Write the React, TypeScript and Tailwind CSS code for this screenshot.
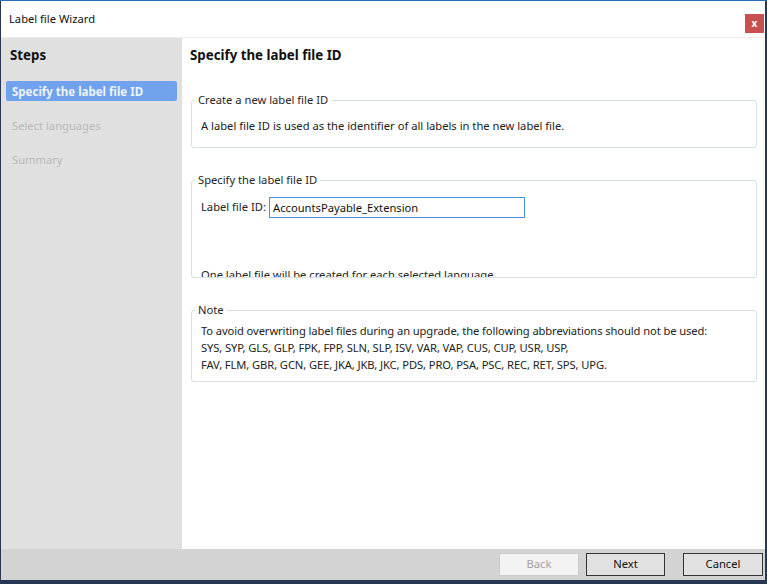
import React from "react";

const font = { fontFamily: '"Segoe UI", "Noto Sans", "Open Sans", sans-serif' };

function Group({ title, children }: { title: string; children: React.ReactNode }) {
  return (
    <fieldset className="border border-[#d7dfe7] rounded-[3px] px-[9px] min-w-0">
      <legend className="ml-[-6px] px-[3px] h-[16px] leading-[16px] text-[11.2px] text-[#262626]">{title}</legend>
      {children}
    </fieldset>
  );
}

export default function App() {
  return (
    <div
      className="w-[767px] h-[584px] bg-[#263754] pl-[1px] pr-[2px] pb-[4px] border-t border-t-[#2a6fb3] flex flex-col text-[#1a1a1a]"
      style={font}
    >
      {/* title bar */}
      <div className="h-[37px] bg-white flex items-start justify-between border-b border-b-[#ededed] shrink-0">
        <span className="pl-[8px] pt-[10px] text-[11.2px] leading-[16px] text-[#111]">Label file Wizard</span>
        <button className="mt-[13px] mr-[1px] w-[19px] h-[19px] bg-[#c75050] text-white text-[10px] font-bold leading-[19px] text-center">
          x
        </button>
      </div>

      <div className="flex flex-1 min-h-0">
        {/* steps */}
        <div className="w-[181px] bg-[#e0e0e0] pt-[7px] shrink-0">
          <div className="pl-[9px] text-[13.3px] font-bold leading-[20px] text-[#111]">Steps</div>
          <div className="mt-[16px] mx-[5px] h-[20px] rounded-[2px] bg-[#70a2ee] pl-[6px] text-[11.5px] font-bold leading-[21px] text-[#eef4fc]">
            Specify the label file ID
          </div>
          <div className="mt-[15px] pl-[11px] h-[20px] leading-[20px] text-[11.2px] text-[#b9b9b9]">Select languages</div>
          <div className="mt-[14px] pl-[11px] h-[20px] leading-[20px] text-[11.2px] text-[#b9b9b9]">Summary</div>
        </div>

        {/* content */}
        <div className="flex-1 bg-white pt-[7px] pl-[9px] pr-[8px]">
          <div className="ml-[-1px] text-[13.3px] font-bold leading-[20px] text-[#111]">Specify the label file ID</div>

          <div className="mt-[27px]">
            <Group title="Create a new label file ID">
              <p className="pt-[10px] pb-[13px] text-[11.2px] leading-[16px] text-[#222]">
                A label file ID is used as the identifier of all labels in the new label file.
              </p>
            </Group>
          </div>

          <div className="mt-[24px]">
            <Group title="Specify the label file ID">
              <div className="h-[89px] overflow-hidden pt-[9px]">
                <div className="flex items-center h-[21px] text-[11.2px] text-[#222]">
                  <span className="w-[68px] shrink-0">Label file ID:</span>
                  <input
                    className="w-[256px] h-[21px] border border-[#4a90e2] px-[3px] text-[11.2px] text-[#111] outline-none"
                    style={font}
                    defaultValue="AccountsPayable_Extension"
                  />
                </div>
                {/* the wizard page clips this line in the original */}
                <p className="mt-[49px] text-[11.2px] leading-[16px] text-[#222]">
                  One label file will be created for each selected language.
                </p>
              </div>
            </Group>
          </div>

          <div className="mt-[24px]">
            <Group title="Note">
              <p className="pt-[4px] pb-[8px] text-[11.2px] tracking-[-0.1px] leading-[17px] text-[#222]">
                To avoid overwriting label files during an upgrade, the following abbreviations should not be used:
                <br />
                SYS, SYP, GLS, GLP, FPK, FPP, SLN, SLP, ISV, VAR, VAP, CUS, CUP, USR, USP,
                <br />
                FAV, FLM, GBR, GCN, GEE, JKA, JKB, JKC, PDS, PRO, PSA, PSC, REC, RET, SPS, UPG.
              </p>
            </Group>
          </div>
        </div>
      </div>

      {/* footer */}
      <div className="h-[31px] bg-[#d3d3d3] flex items-center justify-end pr-[2px] shrink-0">
        <button className="w-[80px] h-[23px] border border-[#cccccc] bg-[#f3f3f3] text-[11.2px] text-[#a3a3a3]">
          Back
        </button>
        <button className="ml-[7px] w-[79px] h-[23px] border border-[#333] bg-[#e1e1e1] text-[11.2px] text-[#111]">
          Next
        </button>
        <button className="ml-[18px] w-[80px] h-[23px] border border-[#333] bg-[#e1e1e1] text-[11.2px] text-[#111]">
          Cancel
        </button>
      </div>
    </div>
  );
}
